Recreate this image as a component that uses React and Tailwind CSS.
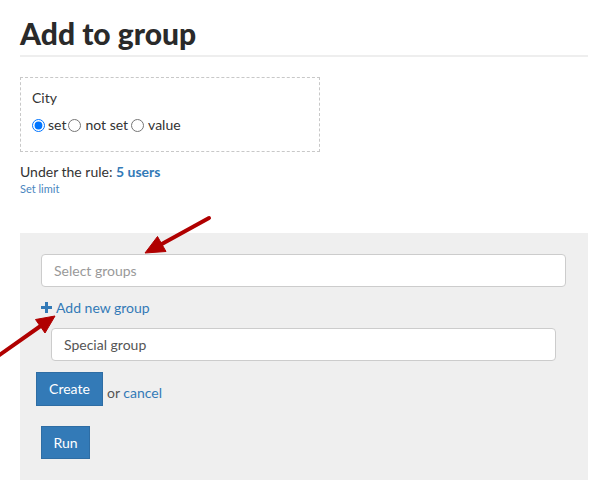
import React from "react";

function Arrows() {
  return (
    <svg
      className="absolute left-0 top-0 pointer-events-none"
      width="605"
      height="496"
      viewBox="0 0 605 496"
    >
      <g fill="#b00000" stroke="#b00000">
        <line x1="209" y1="218" x2="160" y2="245" strokeWidth="4" strokeLinecap="round" />
        <polygon points="145,253 166,251.5 157.5,236.5" strokeWidth="1" strokeLinejoin="round" />
        <line x1="-2" y1="356" x2="42" y2="325" strokeWidth="4" strokeLinecap="round" />
        <polygon points="55,316 45,333 35.5,319.5" strokeWidth="1" strokeLinejoin="round" />
      </g>
    </svg>
  );
}

export default function App() {
  return (
    <div
      className="relative w-[605px] h-[496px] bg-white text-[#333] overflow-hidden"
      style={{ fontFamily: "Lato, 'Open Sans', Arial, sans-serif" }}
    >
      <div className="pl-5 w-[588px]">
        <h1 className="pt-[15px] text-[30px] leading-[36px] font-black text-[#2a2a2a]">
          Add to group
        </h1>
        <div className="mt-[4px] h-0 border-t-2 border-[#eeeeee]" />

        <div className="mt-[20px] w-[300px] h-[75px] border border-dashed border-[#c8c8c8] pl-[11px] pt-[10px]">
          <div className="text-[14px] leading-[20px]">City</div>
          <div className="mt-[7px] flex items-center text-[14px] leading-[20px]">
            <input type="radio" name="city" defaultChecked className="m-0 w-[13px] h-[13px]" />
            <span className="ml-[3px] mr-[2px]">set</span>
            <input type="radio" name="city" className="m-0 w-[13px] h-[13px]" />
            <span className="ml-[4px] mr-[3px]">not set</span>
            <input type="radio" name="city" className="m-0 w-[13px] h-[13px]" />
            <span className="ml-[4px]">value</span>
          </div>
        </div>

        <div className="mt-[10px] text-[14px] leading-[20px]">
          Under the rule: <span className="font-bold text-[#337ab7]">5 users</span>
        </div>
        <div className="text-[11px] leading-[14px] text-[#4a86c0]">Set limit</div>

        <div className="mt-[37px] bg-[#efefef] w-[568px] pt-[21px] pb-[21px] pl-[21px] pr-[22px]">
          <div className="h-[33px] bg-white border border-[#cccccc] rounded-[4px] flex items-center pl-[12px] text-[14px] text-[#999]">
            Select groups
          </div>
          <div className="mt-[10px] h-[20px] flex items-center text-[14px] text-[#337ab7]">
            <svg width="11" height="11" viewBox="0 0 11 11" className="mr-[4px]">
              <rect x="4" y="0" width="3" height="11" fill="#337ab7" />
              <rect x="0" y="4" width="11" height="3" fill="#337ab7" />
            </svg>
            Add new group
          </div>
          <div className="mt-[11px] ml-[10px] mr-[10px] h-[33px] bg-white border border-[#cccccc] rounded-[4px] flex items-center pl-[12px] text-[14px] text-[#555]">
            Special group
          </div>
          <div className="mt-[11px] -ml-[5px] flex items-center">
            <div className="w-[67px] h-[34px] bg-[#337ab7] border border-[#2e6da4] text-white text-[14px] flex items-center justify-center pb-[2px]">
              Create
            </div>
            <span className="ml-[4px] mt-[6px] text-[14px] text-[#555]">
              or <span className="text-[#337ab7]">cancel</span>
            </span>
          </div>
          <div className="mt-[20px] w-[49px] h-[33px] bg-[#337ab7] border border-[#2e6da4] text-white text-[14px] flex items-center justify-center">
            Run
          </div>
        </div>
      </div>
      <Arrows />
    </div>
  );
}
